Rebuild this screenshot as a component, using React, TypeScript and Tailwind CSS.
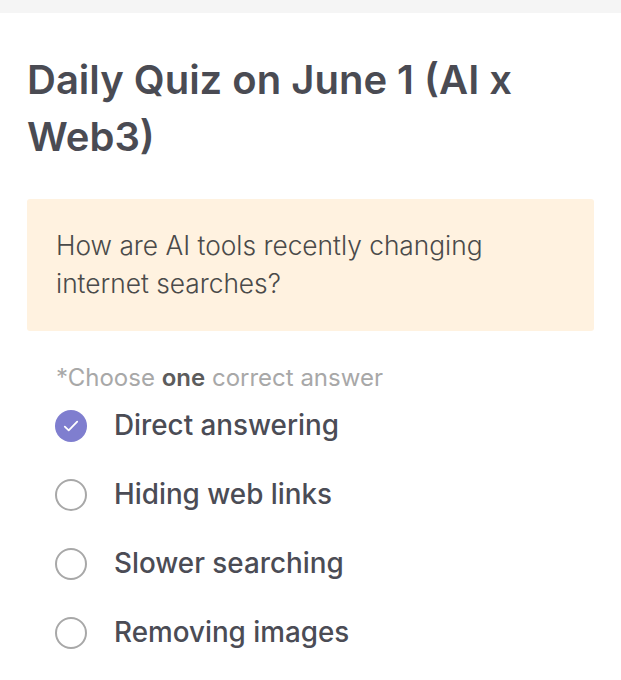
import React, { useState } from 'react';

const options = ['Direct answering', 'Hiding web links', 'Slower searching', 'Removing images'];

const App = () => {
    const [selected, setSelected] = useState(0);

    return (
        <div className="min-h-screen bg-white font-['Inter',sans-serif]">
            <div className="h-[13px] bg-[#f5f5f5]" />
            <div className="px-[27px] pt-[38px]">
                <h1 className="text-[40px] leading-[57px] font-semibold text-[#4a4b53] pr-[60px]">
                    Daily Quiz on June 1 (AI x Web3)
                </h1>

                <div className="mt-[34px] bg-[#fff2e0] rounded-[3px] px-[29px] py-[28px]">
                    <p className="text-[26.3px] leading-[38px] font-light text-[#4a4a4a]">
                        How are AI tools recently changing
                        <br />
                        internet searches?
                    </p>
                </div>

                <p className="mt-[33px] ml-[29px] text-[24px] leading-[28px] text-[#a8a8a8]">
                    *Choose <span className="font-semibold text-[#5c5c5c]">one</span> correct answer
                </p>

                {/* answer options */}
                <ul className="-mt-[1px] ml-[28px]">
                    {options.map((opt, index) => (
                        <li
                            key={opt}
                            className="flex items-center h-[69px] cursor-pointer"
                            onClick={() => setSelected(index)}
                        >
                            {selected === index ? (
                                <span className="w-[32px] h-[32px] rounded-full bg-[#7f7ecf] flex items-center justify-center">
                                    <svg width="16" height="16" viewBox="0 0 16 16" fill="none">
                                        <path d="M1.8 8.6l3.9 3.7 8.5-8.6" stroke="white" strokeWidth="1.8" strokeLinecap="round" strokeLinejoin="round" />
                                    </svg>
                                </span>
                            ) : (
                                <span className="w-[32px] h-[32px] rounded-full border-2 border-[#a8a8a8]" />
                            )}
                            <span className="ml-[27px] text-[27.8px] font-medium text-[#4b4c55]">{opt}</span>
                        </li>
                    ))}
                </ul>
            </div>
        </div>
    );
};

export default App;
